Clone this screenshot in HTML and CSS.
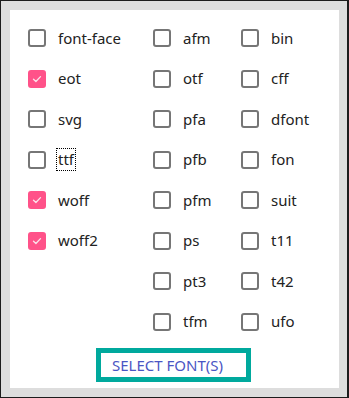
FILE: index.html
```html
<!DOCTYPE html>
<html lang="en">
<head>
    <meta charset="UTF-8">
    <title>Font formats</title>
    <link rel="stylesheet" href="styles.css">
</head>
<body>
    <div class="panel">
        <div class="formats">
            <div class="column col-1">
                <label class="option"><span class="box"></span><span class="name">font-face</span></label>
                <label class="option checked"><span class="box"><svg viewBox="0 0 18 18"><path d="M4.5 9.2 7.6 12.2 13.5 6"/></svg></span><span class="name">eot</span></label>
                <label class="option"><span class="box"></span><span class="name">svg</span></label>
                <label class="option"><span class="box"></span><span class="name focused">ttf</span></label>
                <label class="option checked"><span class="box"><svg viewBox="0 0 18 18"><path d="M4.5 9.2 7.6 12.2 13.5 6"/></svg></span><span class="name">woff</span></label>
                <label class="option checked"><span class="box"><svg viewBox="0 0 18 18"><path d="M4.5 9.2 7.6 12.2 13.5 6"/></svg></span><span class="name">woff2</span></label>
            </div>
            <div class="column col-2">
                <label class="option"><span class="box"></span><span class="name">afm</span></label>
                <label class="option"><span class="box"></span><span class="name">otf</span></label>
                <label class="option"><span class="box"></span><span class="name">pfa</span></label>
                <label class="option"><span class="box"></span><span class="name">pfb</span></label>
                <label class="option"><span class="box"></span><span class="name">pfm</span></label>
                <label class="option"><span class="box"></span><span class="name">ps</span></label>
                <label class="option"><span class="box"></span><span class="name">pt3</span></label>
                <label class="option"><span class="box"></span><span class="name">tfm</span></label>
            </div>
            <div class="column col-3">
                <label class="option"><span class="box"></span><span class="name">bin</span></label>
                <label class="option"><span class="box"></span><span class="name">cff</span></label>
                <label class="option"><span class="box"></span><span class="name">dfont</span></label>
                <label class="option"><span class="box"></span><span class="name">fon</span></label>
                <label class="option"><span class="box"></span><span class="name">suit</span></label>
                <label class="option"><span class="box"></span><span class="name">t11</span></label>
                <label class="option"><span class="box"></span><span class="name">t42</span></label>
                <label class="option"><span class="box"></span><span class="name">ufo</span></label>
            </div>
        </div>
        <div class="actions">
            <button class="select-btn">SELECT FONT(S)</button>
        </div>
    </div>
</body>
</html>
```

FILE: styles.css
```css
:root {
    --frame: #dddddd; --edge: #1c1c1c; --text: #222222;
    --box-border: #767676; --checked: #ff5289; --teal: #00a99d; --link: #4a55c4;
}
* { box-sizing: border-box; margin: 0; padding: 0; }
html, body { height: 100%; }
body {
    font-family: 'Noto Sans', sans-serif; color: var(--text); background-color: var(--frame);
    border: 1px solid var(--edge); border-right-width: 2px; padding: 9px 8px 9px 9px;
}
.panel { background-color: #fff; height: 100%; padding-top: 19px; }
.formats { display: grid; grid-template-columns: 125px 88px auto; padding-left: 18px; }
.column { display: flex; flex-direction: column; gap: 22.57px; }
.option { display: flex; align-items: center; gap: 11px; height: 18px; font-size: 15px; cursor: pointer; }
.box {
    width: 18px; height: 18px; flex-shrink: 0; border: 2px solid var(--box-border); border-radius: 3px;
    display: flex; align-items: center; justify-content: center;
}
.option.checked .box { background-color: var(--checked); border-color: var(--checked); }
.box svg { width: 18px; height: 18px; fill: none; stroke: #fbe3ea; stroke-width: 1.7; stroke-linecap: round; stroke-linejoin: round; }
.name { line-height: 21px; padding: 0 1px; }
.name.focused { outline: 1px dotted #000; }
.actions { display: flex; justify-content: center; padding-right: 2px; margin-top: 17px; }
.select-btn {
    background-color: #fff; border: 5px solid var(--teal); color: var(--link); text-align: left;
    font-family: 'Noto Sans', sans-serif; font-size: 15px; padding: 0 0 0 11px; height: 34px; width: 155px;
}
```
